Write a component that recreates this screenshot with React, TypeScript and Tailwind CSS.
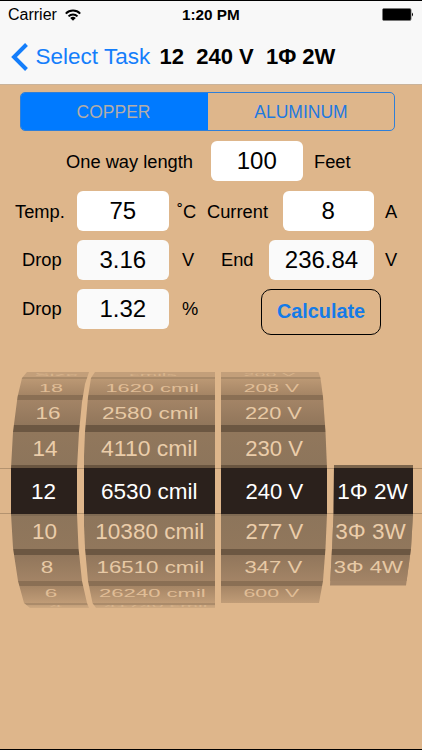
import React from 'react';
import clsx from 'clsx';

interface WheelItem {
  text: string;
  shift: number;
  width?: number;
}

interface WheelColumnProps {
  items: WheelItem[];
  first?: number;
  className: string;
}

// One entry per visible slot of the cylinder, top to bottom
const SLOTS = [
  { row: 'h-[4.5px] bg-[#c39f7a]', gap: 'h-[2px] bg-[#a98a69]', text: 'text-[#d8b48c]', scaleY: 0.17, y: 0.8 },
  { row: 'h-[16px] bg-linear-to-b from-[#bb9874] to-[#a58565]', gap: 'h-[5px] bg-[#8a6f54]', text: 'text-[#e0bd96]', scaleY: 0.49, y: 2.4 },
  { row: 'h-[25px] bg-linear-to-b from-[#a38466] to-[#91765b]', gap: 'h-[7px] bg-[#6c5742]', text: 'text-[#e7c9a5]', scaleY: 0.77, y: 2 },
  { row: 'h-[33px] bg-linear-to-b from-[#91775c] to-[#8d755b]', gap: 'h-[3.5px] bg-[#695540]', text: 'text-[#ebcdaa]', scaleY: 0.94, y: 1.5 },
  { row: 'h-[45.5px] bg-[#2b211c]', gap: 'h-[2px] bg-[#7f6a53]', text: 'text-white', scaleY: 1, y: 0.5 },
  { row: 'h-[33px] bg-linear-to-b from-[#8d755b] to-[#91775c]', gap: 'h-[6px] bg-[#6c5742]', text: 'text-[#ebcdaa]', scaleY: 0.94, y: 0.3 },
  { row: 'h-[26px] bg-linear-to-b from-[#91765b] to-[#a38466]', gap: 'h-[5px] bg-[#8a6f54]', text: 'text-[#e7c9a5]', scaleY: 0.75, y: 0.8 },
  { row: 'h-[17px] bg-linear-to-b from-[#a58565] to-[#c09c77]', gap: 'h-[2px] bg-[#ab8b6a]', text: 'text-[#e0bd96]', scaleY: 0.5, y: -1 },
  { row: 'h-[4px] bg-linear-to-b from-[#c39f7a] to-[#d3ad84]', gap: 'h-0', text: 'text-[#d8b48c]', scaleY: 0.17, y: -0.5 },
];

const SIZES: WheelItem[] = [
  { text: 'Size', shift: 6.5 },
  { text: '18', shift: 1.5, width: 0.96 },
  { text: '16', shift: -2 },
  { text: '14', shift: -5 },
  { text: '12', shift: -6.5 },
  { text: '10', shift: -5.5 },
  { text: '8', shift: -3 },
  { text: '6', shift: 1 },
  { text: '4', shift: 6 },
];

const AREAS: WheelItem[] = [
  { text: 'cmils', shift: 3.5, width: 0.93 },
  { text: '1620 cmil', shift: 3, width: 0.97 },
  { text: '2580 cmil', shift: 1 },
  { text: '4110 cmil', shift: 0, width: 1.02 },
  { text: '6530 cmil', shift: 0 },
  { text: '10380 cmil', shift: 0.5 },
  { text: '16510 cmil', shift: 1, width: 0.99 },
  { text: '26240 cmil', shift: 3, width: 0.98 },
  { text: '41740 cmil', shift: 6.5, width: 0.95 },
];

const VOLTAGES: WheelItem[] = [
  { text: '200 V', shift: -5, width: 0.88 },
  { text: '208 V', shift: -3, width: 0.94 },
  { text: '220 V', shift: -1, width: 0.97 },
  { text: '230 V', shift: -0.3, width: 0.98 },
  { text: '240 V', shift: 0, width: 0.98 },
  { text: '277 V', shift: 0, width: 0.98 },
  { text: '347 V', shift: -1, width: 0.98 },
  { text: '600 V', shift: -3, width: 0.95 },
];

const PHASES: WheelItem[] = [
  { text: '1Φ 2W', shift: 1 },
  { text: '3Φ 3W', shift: -1 },
  { text: '3Φ 4W', shift: -3, width: 0.98 },
];

const WheelColumn: React.FC<WheelColumnProps> = ({ items, first = 0, className }) => (
  <div className={clsx('flex flex-col shrink-0', className)}>
    {items.map((item, i) => {
      const slot = SLOTS[first + i];
      return (
        <React.Fragment key={item.text}>
          <div className={clsx('flex items-center justify-center overflow-hidden text-[22.5px] leading-none whitespace-nowrap shrink-0', slot.row, slot.text)}>
            <span
              className="block"
              style={{ transform: `translate(${item.shift}px, ${slot.y}px) scale(${item.width ?? 1}, ${slot.scaleY})` }}
            >
              {item.text}
            </span>
          </div>
          {i < items.length - 1 && <div className={clsx('shrink-0', slot.gap)} />}
        </React.Fragment>
      );
    })}
  </div>
);

const Field: React.FC<{ value: string; className?: string }> = ({ value, className }) => (
  <input
    readOnly
    value={value}
    className={clsx('h-10 shrink-0 rounded-[6px] text-center text-[24px] text-black outline-none', className)}
  />
);

const Label: React.FC<{ children: React.ReactNode; className: string }> = ({ children, className }) => (
  <span className={clsx('shrink-0 whitespace-nowrap pt-[2px] text-[18.3px] leading-none', className)}>{children}</span>
);

export default function App() {
  return (
    <div className="flex h-[750px] w-[422px] flex-col overflow-hidden border-y border-black bg-[#deb68b] font-['Liberation_Sans',Arial,sans-serif] text-black">
      <header className="h-[84px] shrink-0 bg-[#f8f8f8] border-b border-[#c9b39b]">
        {/* Status bar */}
        <div className="flex h-[27px] items-center pl-2 pr-[8px] text-[16px]">
          <span className="w-[57px] pt-px leading-none">Carrier</span>
          <svg className="h-[12px] w-[16px]" viewBox="0 0 16 12" fill="none" stroke="black" strokeWidth="2">
            <path d="M.8 4.6a10.2 10.2 0 0 1 14.4 0M3.5 7.4a6.4 6.4 0 0 1 9 0" />
            <path d="M8 11.7 5.2 9a4 4 0 0 1 5.6 0z" fill="black" stroke="none" />
          </svg>
          <span className="ml-[101px] pt-px text-[15.3px] font-bold leading-none">1:20 PM</span>
          <svg className="ml-auto h-[13px] w-[32px]" viewBox="0 0 32 13">
            <rect x=".5" y=".5" width="28.5" height="12" rx="1.5" stroke="#777" />
            <rect x="1" y="1" width="27.5" height="11" rx="1" />
            <path d="M30 4.5q2 2 0 4z" />
          </svg>
        </div>
        {/* Navigation bar */}
        <div className="flex h-[57px] items-center pl-[11px]">
          <svg className="h-7 w-[17px]" viewBox="0 0 17 28" fill="none" stroke="#147efb" strokeWidth="4">
            <path d="M15.5 1.5 3 14l12.5 12.5" />
          </svg>
          <button className="ml-[7.5px] w-[124px] pt-px text-left text-[22.5px] leading-none text-[#147efb]">Select Task</button>
          <h1 className="whitespace-pre pt-px text-[22px] font-bold leading-none">12  240 V  1Φ 2W</h1>
        </div>
      </header>

      {/* Conductor material */}
      <div className="mt-[7px] ml-5 flex h-[39px] w-[375px] shrink-0 overflow-hidden rounded-[5px] border border-[#2f7fd8] text-[17.5px]">
        <button className="w-[187px] bg-[#007aff] pt-[2px] pr-[2px] text-[#b3ada8]">COPPER</button>
        <button className="flex-1 pt-[2px] text-[#1f79e0]">ALUMINUM</button>
      </div>

      <div className="mt-[10px] flex shrink-0 items-center pl-[66px]">
        <Label className="w-[145px]">One way length</Label>
        <Field value="100" className="w-[91.5px] bg-white" />
        <Label className="ml-[11.5px]">Feet</Label>
      </div>
      <div className="mt-[10px] flex shrink-0 items-center pl-[15px]">
        <Label className="w-[62px]">Temp.</Label>
        <Field value="75" className="w-[91.5px] bg-white" />
        <Label className="ml-[8.5px] w-[30px]">˚C</Label>
        <Label className="w-[75.5px]">Current</Label>
        <Field value="8" className="w-[91.5px] bg-white" />
        <Label className="ml-[11px]">A</Label>
      </div>
      <div className="mt-[8.5px] flex shrink-0 items-center pl-[22px]">
        <Label className="w-[55px]">Drop</Label>
        <Field value="3.16" className="w-[91.5px] bg-[#fafafa]" />
        <Label className="ml-[13.5px] w-[39px]">V</Label>
        <Label className="w-[48px]">End</Label>
        <Field value="236.84" className="w-[105px] bg-[#fafafa]" />
        <Label className="ml-[11px]">V</Label>
      </div>
      <div className="mt-[9px] flex h-[46px] shrink-0 items-start pl-[22px]">
        <div className="flex h-10 items-center">
          <Label className="w-[55px]">Drop</Label>
          <Field value="1.32" className="w-[91.5px] bg-[#fafafa]" />
          <Label className="ml-[13.5px] w-[79px]">%</Label>
        </div>
        <button className="h-[46px] w-[120px] rounded-[10px] border border-black pt-px text-[19.8px] font-bold leading-none text-[#147be8]">Calculate</button>
      </div>

      {/* Picker wheel */}
      <div className="relative mt-[37.5px] flex h-[236px] shrink-0 items-start">
        <div className="absolute inset-x-0 top-[95.5px] h-[46px] border-y border-[#b4936f]" />
        <WheelColumn
          items={SIZES}
          className="relative ml-[11px] w-[78px] [clip-path:polygon(16px_0,78px_0,74px_12px,71px_30px,68px_60px,66px_96px,66px_142px,67.5px_176px,71px_209px,76px_231px,78px_236px,19px_236px,13px_231px,7px_209px,2px_176px,0_142px,0_96px,2px_60px,6.5px_25px,11px_6px)]"
        />
        <WheelColumn
          items={AREAS}
          className="relative -ml-[5.5px] w-[131.5px] [clip-path:polygon(11.5px_0,131.5px_0,131.5px_236px,12.5px_236px,9px_231px,4.5px_209px,1.5px_176px,0_142px,0_96px,1.5px_60px,4.5px_25px,7.5px_6px)]"
        />
        <WheelColumn
          items={VOLTAGES}
          className="relative ml-[6px] w-[106px] [clip-path:polygon(0_0,97.5px_0,99.5px_6px,102px_25px,104.5px_60px,106px_96px,106px_142px,104.5px_176px,102px_209px,98px_231px,0_231px)]"
        />
        <div className="relative ml-[3px] mt-[92.5px] h-[121px] w-[83px] bg-[#a58668] [clip-path:polygon(4px_0,83px_0,83px_50px,81px_84px,76px_121px,0_121px,2px_84px,3.5px_50px)]">
          <div className="h-[3.5px] bg-[#7c654c]" />
          <WheelColumn items={PHASES} first={4} className="w-full" />
        </div>
      </div>
    </div>
  );
}
